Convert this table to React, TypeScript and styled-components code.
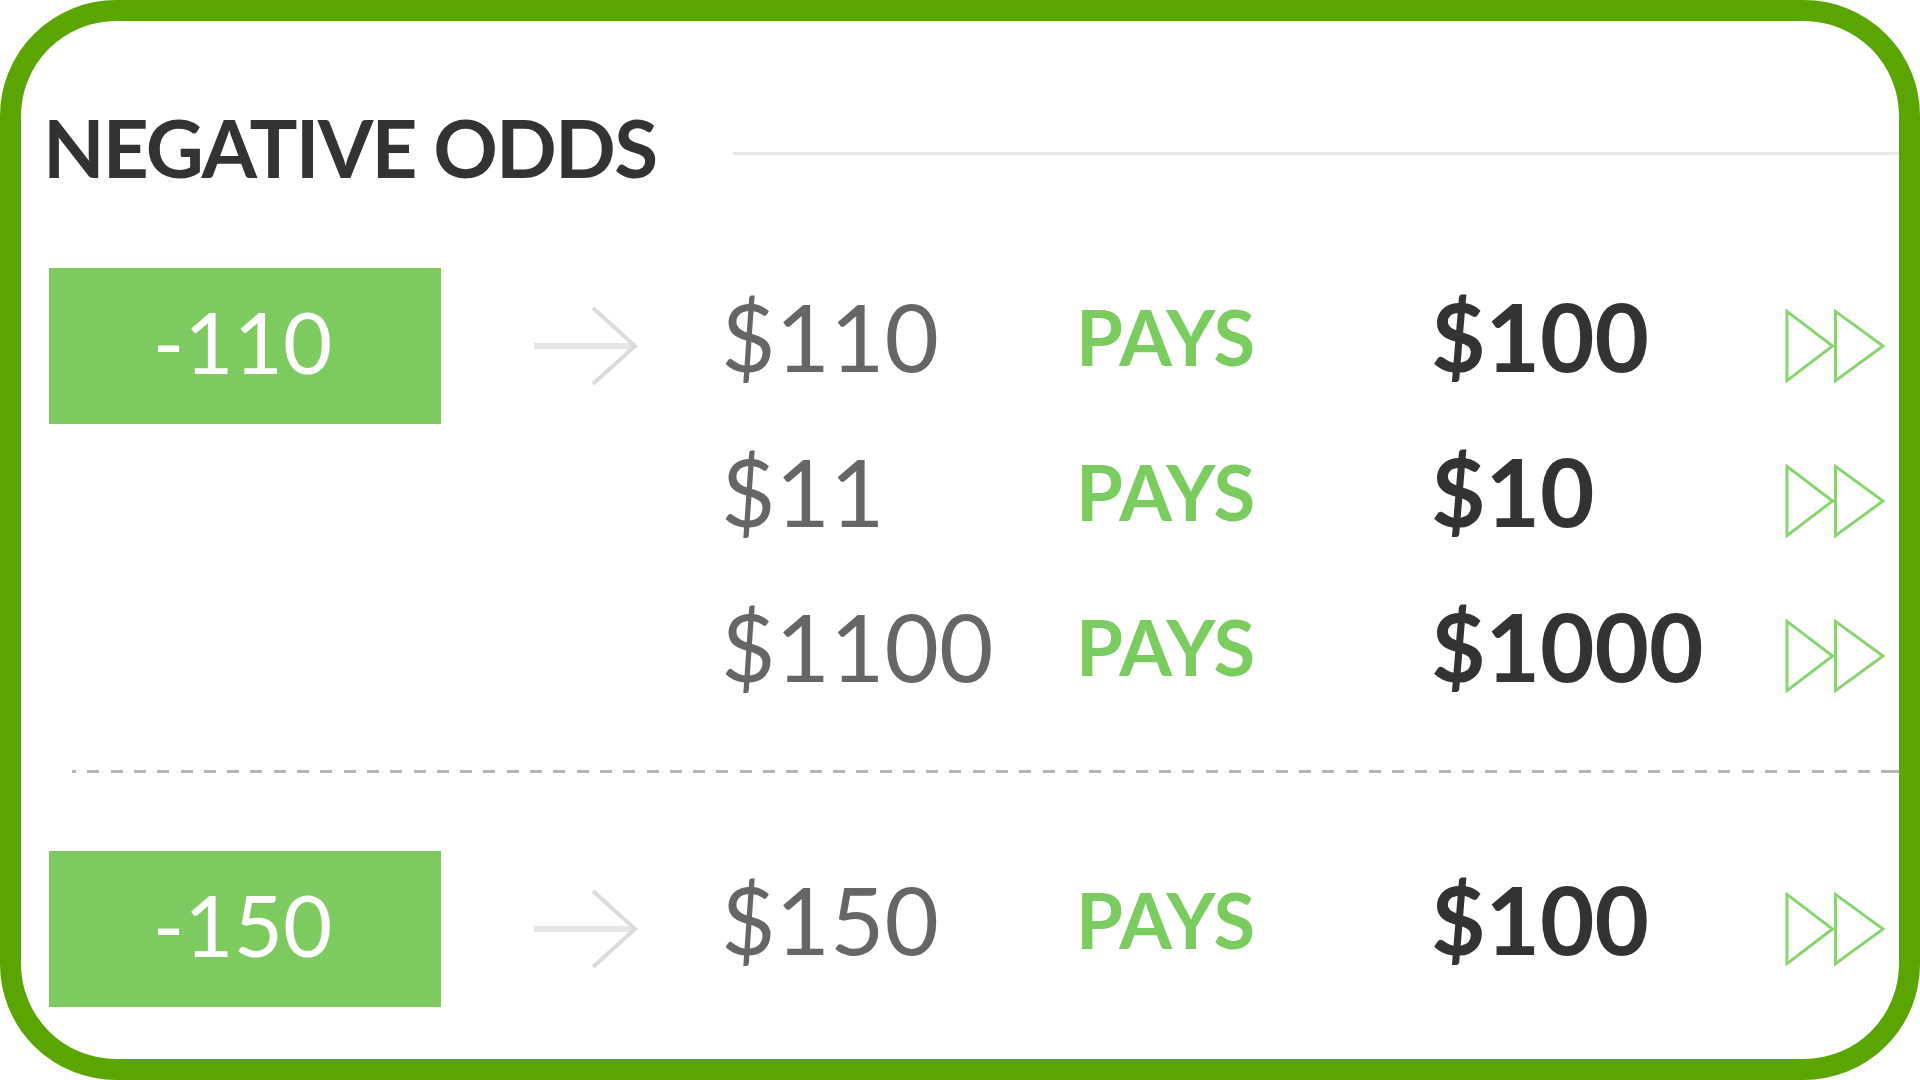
import React from "react";
import styled, { createGlobalStyle } from "styled-components";

const GlobalStyle = createGlobalStyle`
  html, body {
    margin: 0;
    padding: 0;
    background: #fff;
  }
  body {
    font-family: Lato, "Liberation Sans", sans-serif;
  }
`;

const Card = styled.div`
  box-sizing: border-box;
  width: 1920px;
  height: 1080px;
  border: 21px solid #5aa500;
  border-radius: 116px;
  padding: 86px 0 0 28px;
  display: flex;
  flex-direction: column;
  overflow: hidden;
`;

const HeaderRow = styled.div`
  display: flex;
  align-items: flex-start;
  gap: 77px;
`;

const Title = styled.h2`
  margin: 0 0 0 -6px;
  font-size: 80px;
  line-height: 1;
  font-weight: 700;
  color: #333;
  letter-spacing: -1.8px;
  white-space: nowrap;
`;

const TitleRule = styled.div`
  flex: 1;
  height: 3px;
  margin-top: 45px;
  background: #e8e8e8;
`;

const Block = styled.div<{ $top: number }>`
  margin-top: ${(p) => p.$top}px;
  display: flex;
  flex-direction: column;
`;

const Row = styled.div`
  display: grid;
  grid-template-columns: 392px 284px 355px 355px 350px 101px;
  height: 155px;
  align-items: center;
`;

const OddsBox = styled.div`
  height: 156px;
  background: #7dcb5f;
  color: #fff;
  display: flex;
  align-items: center;
  justify-content: center;
  font-size: 85px;
  line-height: 1;
  font-weight: 400;
  padding: 0 5px 10px 0;
  box-sizing: border-box;
`;

const Spacer = styled.div``;

const ArrowWrap = styled.div`
  margin-left: 91px;
  display: flex;
`;

const Amount = styled.div<{ $tone: "stake" | "win" }>`
  font-size: 94px;
  line-height: 1;
  margin: 0 0 20px -4px;
  font-weight: ${(p) => (p.$tone === "win" ? 700 : 400)};
  color: ${(p) => (p.$tone === "win" ? "#333" : "#666")};
  white-space: nowrap;
`;

const Pays = styled.div`
  font-size: 76px;
  line-height: 1;
  font-weight: 700;
  color: #7acc5e;
  margin: 0 0 18px -4px;
`;

const IconWrap = styled.div`
  display: flex;
`;

const DashedRule = styled.div`
  height: 3px;
  margin: 37px 0 0 23px;
  background: repeating-linear-gradient(
    to right,
    #b5b5b5 0 12px,
    transparent 12px 23.3px
  );
  background-position: -8px 0;
`;

const Arrow = () => (
  <svg width="106" height="80" viewBox="0 0 106 80">
    <line x1="2" y1="40" x2="100" y2="40" stroke="#e6e6e6" strokeWidth="6" />
    <polyline
      points="61,2 103,40 61,78"
      fill="none"
      stroke="#dcdcdc"
      strokeWidth="4"
    />
  </svg>
);

const Forward = () => (
  <svg width="102" height="74" viewBox="0 0 102 74">
    <polygon
      points="2,2 48,37 2,72"
      fill="none"
      stroke="#88d46f"
      strokeWidth="3"
    />
    <polygon
      points="51,2 99,37 51,72"
      fill="none"
      stroke="#88d46f"
      strokeWidth="3"
    />
  </svg>
);

type Line = { stake: string; win: string };
type OddsGroup = { odds: string; lines: Line[] };

const groups: OddsGroup[] = [
  {
    odds: "-110",
    lines: [
      { stake: "$110", win: "$100" },
      { stake: "$11", win: "$10" },
      { stake: "$1100", win: "$1000" },
    ],
  },
  {
    odds: "-150",
    lines: [{ stake: "$150", win: "$100" }],
  },
];

const OddsBlock: React.FC<{ group: OddsGroup; top: number }> = ({ group, top }) => (
  <Block $top={top}>
    {group.lines.map((line, i) => (
      <Row key={line.stake}>
        {i === 0 ? <OddsBox>{group.odds}</OddsBox> : <Spacer />}
        {i === 0 ? (
          <ArrowWrap>
            <Arrow />
          </ArrowWrap>
        ) : (
          <Spacer />
        )}
        <Amount $tone="stake">{line.stake}</Amount>
        <Pays>PAYS</Pays>
        <Amount $tone="win">{line.win}</Amount>
        <IconWrap>
          <Forward />
        </IconWrap>
      </Row>
    ))}
  </Block>
);

export default function App() {
  return (
    <>
      <GlobalStyle />
      <Card>
        <HeaderRow>
          <Title>NEGATIVE ODDS</Title>
          <TitleRule />
        </HeaderRow>
        <OddsBlock group={groups[0]} top={81} />
        <DashedRule />
        <OddsBlock group={groups[1]} top={78} />
      </Card>
    </>
  );
}
